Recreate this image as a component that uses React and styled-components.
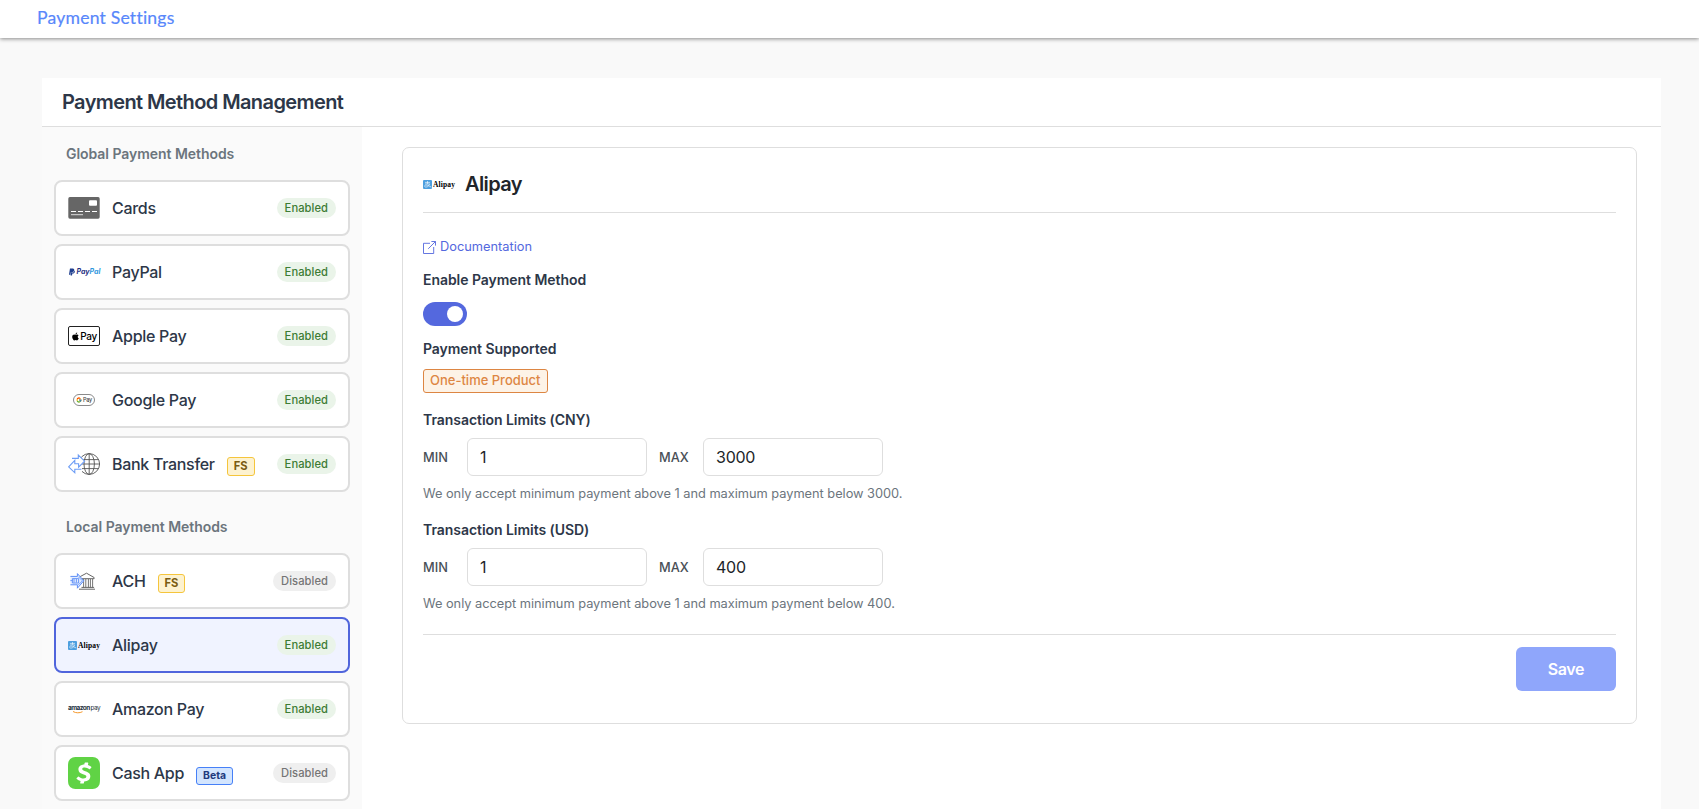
import React, { useState } from 'react';
import styled, { createGlobalStyle } from 'styled-components';
import { SiCashapp } from 'react-icons/si';
import { FaApple, FaPaypal } from 'react-icons/fa';
import { FcGoogle } from 'react-icons/fc';

const CardsIcon = () => (
  <svg width="32" height="32" viewBox="0 0 32 32">
    <rect x="0.3" y="5.1" width="31.4" height="21.6" rx="1.6" fill="#666" />
    <rect x="21" y="8.2" width="8" height="5.6" rx="1" fill="#fff" />
    <path d="M3 19.5h5M10 19.5h5M17 19.5h5M24 19.5h5" stroke="#fff" strokeWidth="1" />
    <path d="M3 22.7h12" stroke="#ddd" strokeWidth="1" />
  </svg>
);

const PayPalIcon = () => (
  <PayPalMark>
    <FaPaypal size={8} color="#1f3f8f" />
    <span>Pay<em>Pal</em></span>
  </PayPalMark>
);

const ApplePayIcon = () => (
  <ApplePayMark>
    <FaApple size={9} />
    <span>Pay</span>
  </ApplePayMark>
);

const GooglePayIcon = () => (
  <GooglePayMark>
    <FcGoogle size={6} />
    <span>Pay</span>
  </GooglePayMark>
);

const BankTransferIcon = () => (
  <svg width="32" height="32" viewBox="0 0 32 32" fill="none">
    <g stroke="#555" strokeWidth="0.9">
      <circle cx="21.2" cy="16" r="10.4" />
      <ellipse cx="21.2" cy="16" rx="5.2" ry="10.4" />
      <path d="M21.2 5.6v20.8M12.4 11.6h17.8M12.4 20.6h17.8M14 16h17.6" />
    </g>
    <path d="M3.4 6.6h6.9L17 13.2l-3 3.4v8.6H6.6L.6 18.9 3.4 15z" fill="#fff" />
    <path
      d="M4 10.4h6.3V7l6.3 6.2-6 6v-3.4H6.8v-3.4L.7 18.8l6.1 6v-3.6h6.6"
      stroke="#6d9df5"
      strokeWidth="1.1"
    />
  </svg>
);

const AchIcon = () => (
  <svg width="32" height="32" viewBox="0 0 32 32" fill="none">
    <g stroke="#666" strokeWidth="1">
      <path d="M10.5 12.5L18.5 8.2l7.6 4.3v1.2H12" />
      <path d="M15.6 14v8.6M17.8 14v8.6M20.4 14v8.6M22.4 14v8.6M24.6 14v8.6" strokeWidth="0.9" />
      <path d="M13.5 22.4h12.6M11 24.2h16" />
    </g>
    <path d="M2.4 11.4h7V8.6l6.4 7.2-6.4 7.4v-3.4h-7" fill="#e3edff" stroke="#5c8df6" strokeWidth="1" />
    <path d="M4.4 13.6v4.4h6.2v-4.4zM6 14v3.6M8.4 14v3.6M2.4 15.6h2" stroke="#5c8df6" strokeWidth="0.9" />
    <path d="M10.4 11.8l4 4-4 4" stroke="#5c8df6" strokeWidth="0.8" />
  </svg>
);

const AlipayIcon = () => (
  <AlipayMark>
    <svg width="9" height="9" viewBox="0 0 9 9" fill="none">
      <rect width="9" height="9" rx="1" fill="#4d9fdf" />
      <path d="M2 2.4h5M4.5 1v2.8M2.2 3.9h4.4C6.2 5.4 5 7 3 7.1 1 7.1 1.2 5 3 5c1.8 0 3 1.3 5.4 2" stroke="#fff" strokeWidth="0.6" />
    </svg>
    <span>Alipay</span>
  </AlipayMark>
);

const AmazonPayIcon = () => (
  <AmazonMark>
    <div><b>amazon</b><span>pay</span></div>
    <svg width="16" height="3" viewBox="0 0 16 3" fill="none">
      <path d="M3 0.5c3 1.7 6.5 1.7 9.5.2" stroke="#f5982a" strokeWidth="1" />
    </svg>
  </AmazonMark>
);

const CashAppIcon = () => (
  <CashAppMark>
    <SiCashapp size={32} />
  </CashAppMark>
);

const ExternalLinkIcon = () => (
  <svg width="13" height="13" viewBox="0 0 13 13" fill="none" stroke="#5468de" strokeWidth="0.9">
    <path d="M7 2.3H.5v10.2h10.2V6" />
    <path d="M8.4.5h4.1v4.1M12.4.6L5.2 7.8" />
  </svg>
);

const globalMethods = [
  { name: 'Cards', icon: <CardsIcon />, enabled: true },
  { name: 'PayPal', icon: <PayPalIcon />, enabled: true },
  { name: 'Apple Pay', icon: <ApplePayIcon />, enabled: true },
  { name: 'Google Pay', icon: <GooglePayIcon />, enabled: true },
  { name: 'Bank Transfer', icon: <BankTransferIcon />, enabled: true, tag: 'FS' },
];

const localMethods = [
  { name: 'ACH', icon: <AchIcon />, enabled: false, tag: 'FS' },
  { name: 'Alipay', icon: <AlipayIcon />, enabled: true },
  { name: 'Amazon Pay', icon: <AmazonPayIcon />, enabled: true },
  { name: 'Cash App', icon: <CashAppIcon />, enabled: false, tag: 'Beta' },
];

const MethodList = ({ title, methods, selected, onSelect }) => (
  <Group>
    <GroupTitle>{title}</GroupTitle>
    <List>
      {methods.map(({ name, icon, enabled, tag }) => (
        <MethodCard key={name} $active={selected === name} onClick={() => onSelect(name)}>
          <IconBox>{icon}</IconBox>
          <MethodName>{name}</MethodName>
          {tag === 'FS' && <FsTag>FS</FsTag>}
          {tag === 'Beta' && <BetaTag>Beta</BetaTag>}
          <Status $enabled={enabled}>{enabled ? 'Enabled' : 'Disabled'}</Status>
        </MethodCard>
      ))}
    </List>
  </Group>
);

const TransactionLimits = ({ currency, min, max }) => (
  <>
    <LimitsLabel>Transaction Limits ({currency})</LimitsLabel>
    <LimitsRow>
      <LimitName>MIN</LimitName>
      <Input defaultValue={min} />
      <LimitName>MAX</LimitName>
      <Input defaultValue={max} />
    </LimitsRow>
    <Hint>
      We only accept minimum payment above {min} and maximum payment below {max}.
    </Hint>
  </>
);

const App = () => {
  const [selected, setSelected] = useState('Alipay');
  const [isOn, setIsOn] = useState(true);

  return (
    <>
      <GlobalStyle />
      <Page>
        <TopBar>
          <a href="#">Payment Settings</a>
        </TopBar>
        <Panel>
          <PanelHeader>Payment Method Management</PanelHeader>
          <PanelBody>
            <Sidebar>
              <MethodList title="Global Payment Methods" methods={globalMethods} selected={selected} onSelect={setSelected} />
              <MethodList title="Local Payment Methods" methods={localMethods} selected={selected} onSelect={setSelected} />
            </Sidebar>
            <Content>
              <Detail>
                <DetailHeader>
                  <IconBox><AlipayIcon /></IconBox>
                  <h2>Alipay</h2>
                </DetailHeader>
                <DocLink href="#">
                  <ExternalLinkIcon />
                  <span>Documentation</span>
                </DocLink>
                <EnableLabel>Enable Payment Method</EnableLabel>
                <Toggle type="button" $on={isOn} onClick={() => setIsOn(!isOn)} aria-label="Enable Payment Method" />
                <SupportedLabel>Payment Supported</SupportedLabel>
                <ProductTag>One-time Product</ProductTag>
                <TransactionLimits currency="CNY" min="1" max="3000" />
                <TransactionLimits currency="USD" min="1" max="400" />
                <DetailFooter>
                  <SaveButton type="button">Save</SaveButton>
                </DetailFooter>
              </Detail>
            </Content>
          </PanelBody>
        </Panel>
      </Page>
    </>
  );
};

const GlobalStyle = createGlobalStyle`
  * {
    box-sizing: border-box;
  }

  body {
    margin: 0;
    font-family: Inter, 'Liberation Sans', sans-serif;
    -webkit-font-smoothing: antialiased;
  }
`;

const Page = styled.div`
  display: flex;
  flex-direction: column;
  height: 100vh;
  overflow: hidden;
  background: #f9f9f9;
`;

const TopBar = styled.header`
  flex: none;
  height: 38px;
  padding-left: 37px;
  background: #fff;
  box-shadow: 0 1px 4px rgba(0, 0, 0, 0.45);

  & a {
    font-family: Lato, sans-serif;
    font-size: 17.6px;
    line-height: 36px;
    letter-spacing: 0.2px;
    color: #5887fb;
    text-decoration: none;
    -webkit-text-stroke: 0.2px #5887fb;
  }
`;

const Panel = styled.main`
  display: flex;
  flex-direction: column;
  flex: 1;
  min-height: 0;
  margin: 40px 38px 0 42px;
  background: #fff;
`;

const PanelHeader = styled.h1`
  flex: none;
  margin: 0;
  padding: 0 20px;
  font-size: 20px;
  font-weight: 600;
  line-height: 48px;
  letter-spacing: -0.6px;
  color: #2d3748;
  border-bottom: 1px solid #dedede;
`;

const PanelBody = styled.div`
  display: flex;
  flex: 1;
  min-height: 0;
`;

const Sidebar = styled.aside`
  display: flex;
  flex-direction: column;
  flex: none;
  gap: 25px;
  width: 320px;
  padding: 17px 12px 0;
  overflow: hidden;
  background: #fafafa;
`;

const Group = styled.section`
  flex: none;
`;

const GroupTitle = styled.h3`
  margin: 0 0 16px;
  padding-left: 12px;
  font-size: 14px;
  font-weight: 600;
  line-height: 20px;
  letter-spacing: -0.05px;
  color: #6c757d;
`;

const List = styled.ul`
  display: flex;
  flex-direction: column;
  gap: 8px;
  margin: 0;
  padding: 0;
  list-style: none;
`;

const MethodCard = styled.li`
  display: flex;
  align-items: center;
  height: 56px;
  padding: 0 12px;
  border: 2px solid ${({ $active }) => ($active ? '#5065dc' : '#dedede')};
  border-radius: 8px;
  background: ${({ $active }) => ($active ? '#f0f3ff' : '#fff')};
  cursor: pointer;
`;

const IconBox = styled.div`
  display: flex;
  align-items: center;
  justify-content: center;
  flex: none;
  width: 32px;
  height: 32px;
`;

const MethodName = styled.span`
  margin-left: 12px;
  font-size: 16px;
  font-weight: 500;
  letter-spacing: -0.3px;
  color: #2d3748;
`;

const FsTag = styled.span`
  margin: 4px 0 0 12px;
  padding: 0 6px;
  font-size: 11.2px;
  font-weight: 700;
  line-height: 17px;
  color: #7a5c12;
  background: #fdf2d0;
  border: 1px solid #f5c53c;
  border-radius: 3px;
`;

const BetaTag = styled.span`
  margin: 5px 0 0 12px;
  padding: 0 6px;
  font-size: 10.4px;
  font-weight: 700;
  line-height: 16px;
  color: #1f3a7d;
  background: #d3e5fe;
  border: 1px solid #4680f7;
  border-radius: 3px;
`;

const Status = styled.span`
  margin-left: auto;
  padding: 0 8px;
  font-size: 11.2px;
  font-weight: 500;
  line-height: 20px;
  letter-spacing: 0.05px;
  color: ${({ $enabled }) => ($enabled ? '#3d7c35' : '#757575')};
  background: ${({ $enabled }) => ($enabled ? '#eaf4e9' : '#efefef')};
  border-radius: 10px;
`;

const Content = styled.section`
  flex: 1;
  padding: 20px 24px 0 40px;
`;

const Detail = styled.div`
  display: flex;
  flex-direction: column;
  align-items: flex-start;
  padding: 20px 20px 32px;
  border: 1px solid #dedede;
  border-radius: 7px;
`;

const DetailHeader = styled.div`
  display: flex;
  align-items: center;
  align-self: stretch;
  gap: 10px;
  padding-bottom: 12px;
  border-bottom: 1px solid #dedede;

  & h2 {
    margin: 0;
    font-size: 20px;
    font-weight: 600;
    line-height: 32px;
    letter-spacing: -0.6px;
    color: #212529;
  }
`;

const DocLink = styled.a`
  display: flex;
  align-items: center;
  gap: 4px;
  margin-top: 24px;
  font-size: 12.8px;
  line-height: 20px;
  color: #5468de;
  text-decoration: none;
`;

const Label = styled.div`
  font-size: 14px;
  font-weight: 600;
  line-height: 20px;
  letter-spacing: -0.05px;
  color: #2d3748;
`;

const EnableLabel = styled(Label)`
  margin-top: 13px;
`;

const SupportedLabel = styled(Label)`
  margin-top: 13px;
`;

const LimitsLabel = styled(Label)`
  margin-top: 17px;

  p + & {
    margin-top: 16px;
  }
`;

const Toggle = styled.button`
  display: flex;
  align-items: center;
  justify-content: ${({ $on }) => ($on ? 'flex-end' : 'flex-start')};
  width: 44px;
  height: 24px;
  margin-top: 12px;
  padding: 0 4px;
  border: none;
  border-radius: 12px;
  background: ${({ $on }) => ($on ? '#5468de' : '#ccc')};
  cursor: pointer;

  &::after {
    content: '';
    width: 16.5px;
    height: 16.5px;
    border-radius: 50%;
    background: #fff;
  }
`;

const ProductTag = styled.span`
  margin-top: 10px;
  padding: 0 6px 1px;
  font-size: 13px;
  font-weight: 500;
  line-height: 21px;
  color: #dd8643;
  background: #fdf3e7;
  border: 1px solid #dd8643;
  border-radius: 3px;
`;

const LimitsRow = styled.div`
  display: flex;
  align-items: center;
  gap: 12px;
  margin-top: 8px;
`;

const LimitName = styled.span`
  width: 32px;
  font-size: 12.8px;
  font-weight: 500;
  color: #495057;
`;

const Input = styled.input`
  width: 180px;
  height: 38px;
  padding: 0 12px;
  font-family: inherit;
  font-size: 16px;
  letter-spacing: -0.25px;
  color: #212529;
  background: #fff;
  border: 1px solid #dedede;
  border-radius: 6px;
  outline: none;
`;

const Hint = styled.p`
  margin: 8px 0 0;
  font-size: 12.8px;
  line-height: 20px;
  letter-spacing: -0.02px;
  color: #6c757d;
`;

const DetailFooter = styled.div`
  display: flex;
  justify-content: flex-end;
  align-self: stretch;
  margin-top: 20px;
  padding-top: 12px;
  border-top: 1px solid #dedede;
`;

const SaveButton = styled.button`
  width: 100px;
  height: 44px;
  font-family: inherit;
  font-size: 16px;
  font-weight: 600;
  letter-spacing: -0.4px;
  color: #fff;
  background: #8fa6fb;
  border: none;
  border-radius: 6px;
  cursor: pointer;
`;

const PayPalMark = styled.div`
  display: flex;
  align-items: center;
  gap: 1px;

  & span {
    font-size: 7px;
    font-weight: 700;
    font-style: italic;
    line-height: 8px;
    color: #1f2f7f;
  }

  & em {
    color: #2f97dd;
  }
`;

const ApplePayMark = styled.div`
  display: flex;
  align-items: center;
  justify-content: center;
  width: 32px;
  height: 20px;
  color: #000;
  border: 1px solid #222;
  border-radius: 2px;

  & span {
    font-size: 10px;
    font-weight: 500;
    line-height: 12px;
    letter-spacing: -0.3px;
  }
`;

const GooglePayMark = styled.div`
  display: flex;
  align-items: center;
  justify-content: center;
  gap: 1px;
  width: 22px;
  height: 12px;
  border: 1px solid #8a8a8a;
  border-radius: 6px;

  & span {
    font-size: 5.5px;
    font-weight: 500;
    line-height: 8px;
    letter-spacing: -0.2px;
    color: #444;
  }
`;

const AlipayMark = styled.div`
  display: flex;
  align-items: center;
  gap: 1px;

  & span {
    font-family: 'Liberation Serif', serif;
    font-size: 7.5px;
    font-weight: 700;
    line-height: 9px;
    letter-spacing: 0.15px;
    color: #000;
  }
`;

const AmazonMark = styled.div`
  width: 32px;
  font-size: 6.4px;
  line-height: 6px;
  color: #232f3e;

  & div {
    display: flex;
    justify-content: space-between;
    letter-spacing: -0.5px;
  }

  & svg {
    display: block;
    margin: 0 0 0 2px;
  }
`;

const CashAppMark = styled.div`
  display: flex;
  color: #60d345;
`;

export default App;
